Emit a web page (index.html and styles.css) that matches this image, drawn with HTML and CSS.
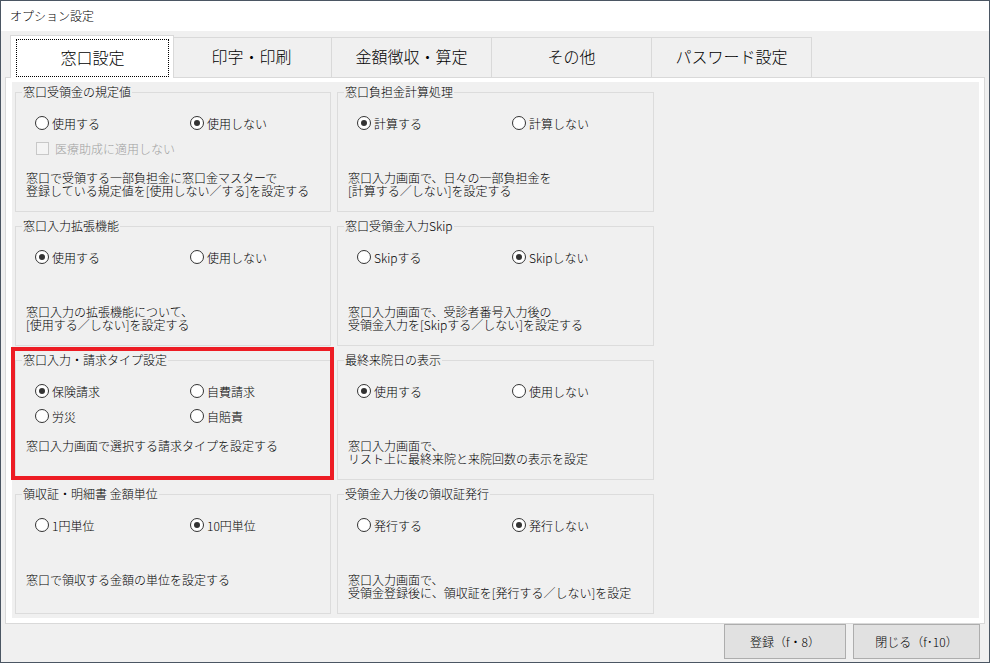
FILE: index.html
```html
<!DOCTYPE html>
<html lang="ja">
<head>
    <meta charset="UTF-8">
    <title>オプション設定</title>
    <link rel="stylesheet" href="styles.css">
</head>
<body>
    <div class="window">
        <div class="titlebar">オプション設定</div>

        <div class="tabs">
            <div class="tab tab-active"><span class="tab-focus">窓口設定</span></div>
            <div class="tab">印字・印刷</div>
            <div class="tab">金額徴収・算定</div>
            <div class="tab">その他</div>
            <div class="tab">パスワード設定</div>
        </div>

        <div class="panel">
            <div class="page">
                <div class="cell">
                    <fieldset class="group">
                        <legend>窓口受領金の規定値</legend>
                        <div class="options">
                            <label class="opt"><span class="radio"></span>使用する</label>
                            <label class="opt"><span class="radio on"></span>使用しない</label>
                            <label class="opt disabled"><span class="checkbox"></span>医療助成に適用しない</label>
                        </div>
                        <p class="desc">窓口で受領する一部負担金に窓口金マスターで<br>登録している規定値を[使用しない／する]を設定する</p>
                    </fieldset>
                </div>
                <div class="cell">
                    <fieldset class="group">
                        <legend>窓口負担金計算処理</legend>
                        <div class="options">
                            <label class="opt"><span class="radio on"></span>計算する</label>
                            <label class="opt"><span class="radio"></span>計算しない</label>
                        </div>
                        <p class="desc">窓口入力画面で、日々の一部負担金を<br>[計算する／しない]を設定する</p>
                    </fieldset>
                </div>

                <div class="cell">
                    <fieldset class="group">
                        <legend>窓口入力拡張機能</legend>
                        <div class="options">
                            <label class="opt"><span class="radio on"></span>使用する</label>
                            <label class="opt"><span class="radio"></span>使用しない</label>
                        </div>
                        <p class="desc">窓口入力の拡張機能について、<br>[使用する／しない]を設定する</p>
                    </fieldset>
                </div>
                <div class="cell">
                    <fieldset class="group">
                        <legend>窓口受領金入力Skip</legend>
                        <div class="options">
                            <label class="opt"><span class="radio"></span>Skipする</label>
                            <label class="opt"><span class="radio on"></span>Skipしない</label>
                        </div>
                        <p class="desc">窓口入力画面で、受診者番号入力後の<br>受領金入力を[Skipする／しない]を設定する</p>
                    </fieldset>
                </div>

                <div class="cell marked">
                    <fieldset class="group">
                        <legend>窓口入力・請求タイプ設定</legend>
                        <div class="options">
                            <label class="opt"><span class="radio on"></span>保険請求</label>
                            <label class="opt"><span class="radio"></span>自費請求</label>
                            <label class="opt"><span class="radio"></span>労災</label>
                            <label class="opt"><span class="radio"></span>自賠責</label>
                        </div>
                        <p class="desc">窓口入力画面で選択する請求タイプを設定する</p>
                    </fieldset>
                </div>
                <div class="cell">
                    <fieldset class="group">
                        <legend>最終来院日の表示</legend>
                        <div class="options">
                            <label class="opt"><span class="radio on"></span>使用する</label>
                            <label class="opt"><span class="radio"></span>使用しない</label>
                        </div>
                        <p class="desc">窓口入力画面で、<br>リスト上に最終来院と来院回数の表示を設定</p>
                    </fieldset>
                </div>

                <div class="cell">
                    <fieldset class="group">
                        <legend>領収証・明細書 金額単位</legend>
                        <div class="options">
                            <label class="opt"><span class="radio"></span>1円単位</label>
                            <label class="opt"><span class="radio on"></span>10円単位</label>
                        </div>
                        <p class="desc">窓口で領収する金額の単位を設定する</p>
                    </fieldset>
                </div>
                <div class="cell">
                    <fieldset class="group">
                        <legend>受領金入力後の領収証発行</legend>
                        <div class="options">
                            <label class="opt"><span class="radio"></span>発行する</label>
                            <label class="opt"><span class="radio on"></span>発行しない</label>
                        </div>
                        <p class="desc">窓口入力画面で、<br>受領金登録後に、領収証を[発行する／しない]を設定</p>
                    </fieldset>
                </div>
            </div>
        </div>

        <div class="footer">
            <button class="btn btn-save">登録（f・8）</button>
            <button class="btn btn-close">閉じる（f･10）</button>
        </div>
    </div>
</body>
</html>
```

FILE: styles.css
```css
body {
    margin: 0;
    font-family: "Noto Sans CJK JP", "Liberation Sans", sans-serif;
    font-size: 12px;
    font-weight: 300;
    color: #000;
    background: #f0f0f0;
}

.window {
    width: 990px;
    height: 663px;
    box-sizing: border-box;
    border: 1px solid #4b5663;
    background: #f0f0f0;
    display: flex;
    flex-direction: column;
}

.titlebar {
    height: 30px;
    flex: none;
    background: #fff;
    padding-left: 9px;
    line-height: 30px;
}

/* tabs */
.tabs {
    height: 46px;
    flex: none;
    display: flex;
    align-items: flex-end;
    padding-left: 11px;
}

.tab {
    width: 161px;
    height: 40px;
    box-sizing: border-box;
    margin-left: -1px;
    padding-bottom: 3px;
    border: 1px solid #d9d9d9;
    border-bottom: none;
    display: flex;
    align-items: center;
    justify-content: center;
    font-size: 16px;
    line-height: 18px;
}

.tab-active {
    width: 164px;
    height: 43px;
    margin: 0 -2px -1px -2px;
    padding: 3px 4px 1px 5px;
    background: #fff;
    position: relative;
    z-index: 1;
    align-items: stretch;
}

.tab-focus {
    flex: 1;
    display: flex;
    align-items: center;
    justify-content: center;
    padding-bottom: 2px;
    border: 1px dotted #000;
}

/* tab page */
.panel {
    flex: none;
    margin-left: 4px;
    width: 980px;
    height: 547px;
    box-sizing: border-box;
    border: 1px solid #d9d9d9;
    background: #fff;
    padding: 4px 5px 5px 6px;
}

.page {
    height: 100%;
    box-sizing: border-box;
    background: #f0f0f0;
    padding: 3px 0 0 3px;
    display: grid;
    grid-template-columns: 316px 317px;
    grid-template-rows: repeat(4, 127px);
    column-gap: 6px;
    row-gap: 7px;
    align-content: start;
}

.cell {
    position: relative;
}

.cell.marked::after {
    content: "";
    position: absolute;
    top: -6px;
    left: -4px;
    right: -3px;
    bottom: 0;
    border: 4px solid #ed1c24;
    pointer-events: none;
}

.group {
    margin: 0;
    padding: 0;
    min-width: 0;
    height: 100%;
    box-sizing: border-box;
    border: 1px solid #dcdcdc;
}

.group legend {
    margin-left: 6px;
    padding: 0 1px;
    line-height: 14px;
}

.options {
    height: 58px;
    margin-top: 14px;
    padding-left: 19px;
    display: grid;
    grid-template-columns: 155px 1fr;
    grid-auto-rows: 20px;
    row-gap: 5px;
    align-content: start;
}

.opt {
    display: flex;
    align-items: center;
    gap: 3px;
    white-space: nowrap;
}

.radio {
    width: 14px;
    height: 14px;
    box-sizing: border-box;
    border: 1px solid #333;
    border-radius: 50%;
    background: #fff;
    display: inline-flex;
    align-items: center;
    justify-content: center;
}

.radio.on::after {
    content: "";
    width: 6px;
    height: 6px;
    border-radius: 50%;
    background: #333;
}

.opt.disabled {
    grid-column: 1 / 3;
    gap: 6px;
    color: #a0a0a0;
}

.checkbox {
    width: 13px;
    height: 13px;
    box-sizing: border-box;
    margin-left: 1px;
    border: 1px solid #c8c8c8;
    background: #f4f4f4;
}

.desc {
    margin: 0;
    padding-left: 10px;
    line-height: 13px;
    white-space: nowrap;
}

/* buttons */
.footer {
    flex: 1;
    display: flex;
    justify-content: flex-end;
    align-items: flex-start;
    gap: 7px;
    padding-right: 9px;
}

.btn {
    height: 35px;
    background: #e1e1e1;
    border: 1px solid #adadad;
    font-family: inherit;
    font-size: 12px;
    font-weight: 300;
    color: #000;
    padding: 0;
}

.btn-save {
    width: 122px;
}

.btn-close {
    width: 127px;
}
```
